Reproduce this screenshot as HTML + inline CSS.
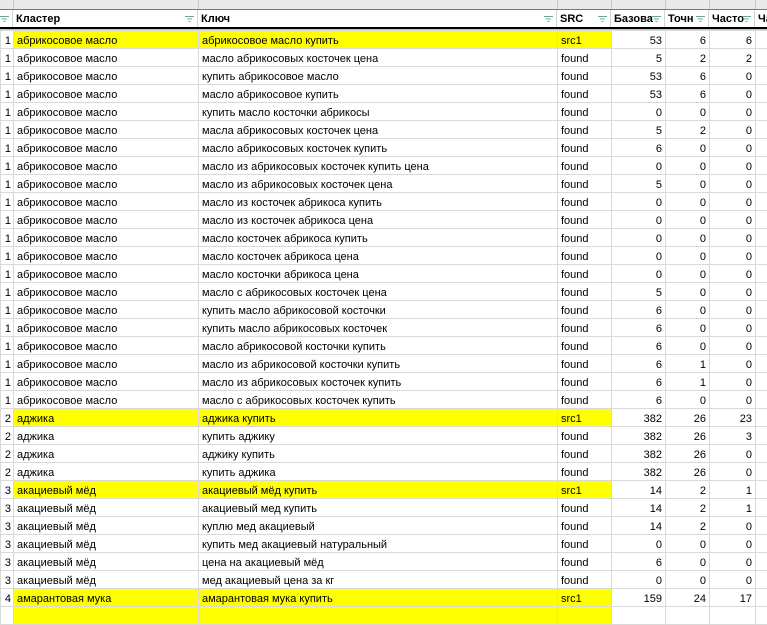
<!DOCTYPE html>
<html><head><meta charset="utf-8"><style>
body{margin:0;width:767px;height:612px;overflow:hidden;background:#fff;font-family:Tahoma,"Liberation Sans","DejaVu Sans",sans-serif;font-size:11px;color:#000;position:relative}
#top{position:absolute;left:0;top:0;width:767px;height:9px;background:#e9e9e9;border-bottom:1px solid #3f9a5c}
#top div{position:absolute;top:0;height:9px;border-left:1px solid #c8c8c8}
#hdr{position:absolute;left:0;top:10px;width:767px;height:17px;border-bottom:2px solid #000}
#gap{position:absolute;left:0;top:29px;width:767px;height:2px;background:#c6c6c6}
.h{position:absolute;top:0;height:17px;line-height:19px;border-right:1px solid #d4d4d4;padding-left:3px;box-sizing:border-box;font-weight:bold;overflow:hidden;white-space:nowrap}
.f{position:absolute;right:3px;top:6px;width:9px;height:6px}
table{position:absolute;left:0;top:30px;border-collapse:collapse;table-layout:fixed;width:775px}
td{height:14px;padding:3px 3px 0 3px;border:1px solid #d9d9d9;white-space:nowrap;overflow:hidden;line-height:14px}
td.a{text-align:right;padding:3px 2px 0 0}
td.n{text-align:right}
tr.g td{border-top:1.5px solid #000}
tr.y td.b,tr.y td.c,tr.y td.d{background:#ffff00}
</style></head><body>
<div id="top">
<div style="left:13px;width:185px"></div><div style="left:198px"></div><div style="left:557px"></div><div style="left:611px"></div><div style="left:665px"></div><div style="left:709px"></div><div style="left:755px"></div>
</div>
<div id="hdr">
<div class="h" style="left:0;width:13px"><svg class="f" viewBox="0 0 9 6"><path d="M0 .5h9M2 3h5M3.5 5.5h2" stroke="#6aa88a" stroke-width="1"/></svg></div>
<div class="h" style="left:13px;width:185px">Кластер<svg class="f" viewBox="0 0 9 6"><path d="M0 .5h9M2 3h5M3.5 5.5h2" stroke="#6aa88a" stroke-width="1"/></svg></div>
<div class="h" style="left:198px;width:359px">Ключ<svg class="f" viewBox="0 0 9 6"><path d="M0 .5h9M2 3h5M3.5 5.5h2" stroke="#6aa88a" stroke-width="1"/></svg></div>
<div class="h" style="left:557px;width:54px">SRC<svg class="f" viewBox="0 0 9 6"><path d="M0 .5h9M2 3h5M3.5 5.5h2" stroke="#6aa88a" stroke-width="1"/></svg></div>
<div class="h" style="left:611px;width:54px">Базова<svg class="f" viewBox="0 0 9 6"><path d="M0 .5h9M2 3h5M3.5 5.5h2" stroke="#6aa88a" stroke-width="1"/></svg></div>
<div class="h" style="left:665px;width:44px">Точн<svg class="f" viewBox="0 0 9 6"><path d="M0 .5h9M2 3h5M3.5 5.5h2" stroke="#6aa88a" stroke-width="1"/></svg></div>
<div class="h" style="left:709px;width:46px">Часто<svg class="f" viewBox="0 0 9 6"><path d="M0 .5h9M2 3h5M3.5 5.5h2" stroke="#6aa88a" stroke-width="1"/></svg></div>
<div class="h" style="left:755px;width:20px">Ча</div>
</div>
<div id="gap"></div>
<table>
<colgroup><col style="width:13px"><col style="width:185px"><col style="width:359px"><col style="width:54px"><col style="width:54px"><col style="width:44px"><col style="width:46px"><col style="width:20px"></colgroup>
<tr class="y"><td class="a">1</td><td class="b">абрикосовое масло</td><td class="c">абрикосовое масло купить</td><td class="d">src1</td><td class="n">53</td><td class="n">6</td><td class="n">6</td><td></td></tr>
<tr><td class="a">1</td><td>абрикосовое масло</td><td>масло абрикосовых косточек цена</td><td>found</td><td class="n">5</td><td class="n">2</td><td class="n">2</td><td></td></tr>
<tr><td class="a">1</td><td>абрикосовое масло</td><td>купить абрикосовое масло</td><td>found</td><td class="n">53</td><td class="n">6</td><td class="n">0</td><td></td></tr>
<tr><td class="a">1</td><td>абрикосовое масло</td><td>масло абрикосовое купить</td><td>found</td><td class="n">53</td><td class="n">6</td><td class="n">0</td><td></td></tr>
<tr><td class="a">1</td><td>абрикосовое масло</td><td>купить масло косточки абрикосы</td><td>found</td><td class="n">0</td><td class="n">0</td><td class="n">0</td><td></td></tr>
<tr><td class="a">1</td><td>абрикосовое масло</td><td>масла абрикосовых косточек цена</td><td>found</td><td class="n">5</td><td class="n">2</td><td class="n">0</td><td></td></tr>
<tr><td class="a">1</td><td>абрикосовое масло</td><td>масло абрикосовых косточек купить</td><td>found</td><td class="n">6</td><td class="n">0</td><td class="n">0</td><td></td></tr>
<tr><td class="a">1</td><td>абрикосовое масло</td><td>масло из абрикосовых косточек купить цена</td><td>found</td><td class="n">0</td><td class="n">0</td><td class="n">0</td><td></td></tr>
<tr><td class="a">1</td><td>абрикосовое масло</td><td>масло из абрикосовых косточек цена</td><td>found</td><td class="n">5</td><td class="n">0</td><td class="n">0</td><td></td></tr>
<tr><td class="a">1</td><td>абрикосовое масло</td><td>масло из косточек абрикоса купить</td><td>found</td><td class="n">0</td><td class="n">0</td><td class="n">0</td><td></td></tr>
<tr><td class="a">1</td><td>абрикосовое масло</td><td>масло из косточек абрикоса цена</td><td>found</td><td class="n">0</td><td class="n">0</td><td class="n">0</td><td></td></tr>
<tr><td class="a">1</td><td>абрикосовое масло</td><td>масло косточек абрикоса купить</td><td>found</td><td class="n">0</td><td class="n">0</td><td class="n">0</td><td></td></tr>
<tr><td class="a">1</td><td>абрикосовое масло</td><td>масло косточек абрикоса цена</td><td>found</td><td class="n">0</td><td class="n">0</td><td class="n">0</td><td></td></tr>
<tr><td class="a">1</td><td>абрикосовое масло</td><td>масло косточки абрикоса цена</td><td>found</td><td class="n">0</td><td class="n">0</td><td class="n">0</td><td></td></tr>
<tr><td class="a">1</td><td>абрикосовое масло</td><td>масло с абрикосовых косточек цена</td><td>found</td><td class="n">5</td><td class="n">0</td><td class="n">0</td><td></td></tr>
<tr><td class="a">1</td><td>абрикосовое масло</td><td>купить масло абрикосовой косточки</td><td>found</td><td class="n">6</td><td class="n">0</td><td class="n">0</td><td></td></tr>
<tr><td class="a">1</td><td>абрикосовое масло</td><td>купить масло абрикосовых косточек</td><td>found</td><td class="n">6</td><td class="n">0</td><td class="n">0</td><td></td></tr>
<tr><td class="a">1</td><td>абрикосовое масло</td><td>масло абрикосовой косточки купить</td><td>found</td><td class="n">6</td><td class="n">0</td><td class="n">0</td><td></td></tr>
<tr><td class="a">1</td><td>абрикосовое масло</td><td>масло из абрикосовой косточки купить</td><td>found</td><td class="n">6</td><td class="n">1</td><td class="n">0</td><td></td></tr>
<tr><td class="a">1</td><td>абрикосовое масло</td><td>масло из абрикосовых косточек купить</td><td>found</td><td class="n">6</td><td class="n">1</td><td class="n">0</td><td></td></tr>
<tr><td class="a">1</td><td>абрикосовое масло</td><td>масло с абрикосовых косточек купить</td><td>found</td><td class="n">6</td><td class="n">0</td><td class="n">0</td><td></td></tr>
<tr class="y g"><td class="a">2</td><td class="b">аджика</td><td class="c">аджика купить</td><td class="d">src1</td><td class="n">382</td><td class="n">26</td><td class="n">23</td><td></td></tr>
<tr><td class="a">2</td><td>аджика</td><td>купить аджику</td><td>found</td><td class="n">382</td><td class="n">26</td><td class="n">3</td><td></td></tr>
<tr><td class="a">2</td><td>аджика</td><td>аджику купить</td><td>found</td><td class="n">382</td><td class="n">26</td><td class="n">0</td><td></td></tr>
<tr><td class="a">2</td><td>аджика</td><td>купить аджика</td><td>found</td><td class="n">382</td><td class="n">26</td><td class="n">0</td><td></td></tr>
<tr class="y g"><td class="a">3</td><td class="b">акациевый мёд</td><td class="c">акациевый мёд купить</td><td class="d">src1</td><td class="n">14</td><td class="n">2</td><td class="n">1</td><td></td></tr>
<tr><td class="a">3</td><td>акациевый мёд</td><td>акациевый мед купить</td><td>found</td><td class="n">14</td><td class="n">2</td><td class="n">1</td><td></td></tr>
<tr><td class="a">3</td><td>акациевый мёд</td><td>куплю мед акациевый</td><td>found</td><td class="n">14</td><td class="n">2</td><td class="n">0</td><td></td></tr>
<tr><td class="a">3</td><td>акациевый мёд</td><td>купить мед акациевый натуральный</td><td>found</td><td class="n">0</td><td class="n">0</td><td class="n">0</td><td></td></tr>
<tr><td class="a">3</td><td>акациевый мёд</td><td>цена на акациевый мёд</td><td>found</td><td class="n">6</td><td class="n">0</td><td class="n">0</td><td></td></tr>
<tr><td class="a">3</td><td>акациевый мёд</td><td>мед акациевый цена за кг</td><td>found</td><td class="n">0</td><td class="n">0</td><td class="n">0</td><td></td></tr>
<tr class="y g"><td class="a">4</td><td class="b">амарантовая мука</td><td class="c">амарантовая мука купить</td><td class="d">src1</td><td class="n">159</td><td class="n">24</td><td class="n">17</td><td></td></tr>
<tr class="y g"><td class="a"></td><td class="b"></td><td class="c"></td><td class="d"></td><td></td><td></td><td></td><td></td></tr>
</table>
</body></html>
